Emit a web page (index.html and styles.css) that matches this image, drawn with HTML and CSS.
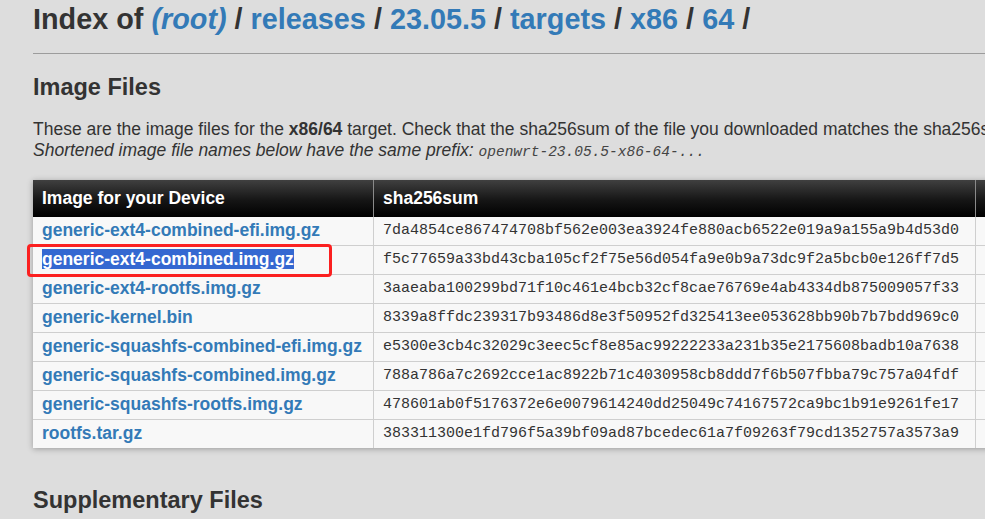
FILE: index.html
```html
<!DOCTYPE html>
<html lang="en">
<head>
<meta charset="utf-8">
<title>Index of (root) / releases / 23.05.5 / targets / x86 / 64 /</title>
<link rel="stylesheet" href="styles.css">
</head>
<body>
<div class="page">
  <h1 class="title">Index of <a href="#" class="root">(root)</a> / <a href="#">releases</a> / <a href="#">23.05.5</a> / <a href="#">targets</a> / <a href="#">x86</a> / <a href="#">64</a> /</h1>
  <hr class="rule">
  <h2 class="section">Image Files</h2>
  <p class="intro">These are the image files for the <b>x86/64</b> target. Check that the sha256sum of the file you downloaded matches the sha256sum below.<br>
  <i>Shortened image file names below have the same prefix: <code class="prefix">openwrt-23.05.5-x86-64-...</code></i></p>
  <table class="files">
    <colgroup><col class="c1"><col class="c2"><col class="c3"><col class="c4"></colgroup>
    <thead>
      <tr><th>Image for your Device</th><th>sha256sum</th><th>File Size</th><th>Date</th></tr>
    </thead>
    <tbody>
      <tr><td class="name"><a href="#">generic-ext4-combined-efi.img.gz</a></td><td class="sh">7da4854ce867474708bf562e003ea3924fe880acb6522e019a9a155a9b4d53d0</td><td>12157.3 KB</td><td>Sat Sep 28</td></tr>
      <tr><td class="name mark"><a href="#" class="sel">generic-ext4-combined.img.gz</a><span class="redbox"></span></td><td class="sh">f5c77659a33bd43cba105cf2f75e56d054fa9e0b9a73dc9f2a5bcb0e126ff7d5</td><td>12126.7 KB</td><td>Sat Sep 28</td></tr>
      <tr><td class="name"><a href="#">generic-ext4-rootfs.img.gz</a></td><td class="sh">3aaeaba100299bd71f10c461e4bcb32cf8cae76769e4ab4334db875009057f33</td><td>4357.9 KB</td><td>Sat Sep 28</td></tr>
      <tr><td class="name"><a href="#">generic-kernel.bin</a></td><td class="sh">8339a8ffdc239317b93486d8e3f50952fd325413ee053628bb90b7b7bdd969c0</td><td>6198.6 KB</td><td>Sat Sep 28</td></tr>
      <tr><td class="name"><a href="#">generic-squashfs-combined-efi.img.gz</a></td><td class="sh">e5300e3cb4c32029c3eec5cf8e85ac99222233a231b35e2175608badb10a7638</td><td>11015.4 KB</td><td>Sat Sep 28</td></tr>
      <tr><td class="name"><a href="#">generic-squashfs-combined.img.gz</a></td><td class="sh">788a786a7c2692cce1ac8922b71c4030958cb8ddd7f6b507fbba79c757a04fdf</td><td>10984.8 KB</td><td>Sat Sep 28</td></tr>
      <tr><td class="name"><a href="#">generic-squashfs-rootfs.img.gz</a></td><td class="sh">478601ab0f5176372e6e0079614240dd25049c74167572ca9bc1b91e9261fe17</td><td>3216.0 KB</td><td>Sat Sep 28</td></tr>
      <tr class="last"><td class="name"><a href="#">rootfs.tar.gz</a></td><td class="sh">383311300e1fd796f5a39bf09ad87bcedec61a7f09263f79cd1352757a3573a9</td><td>4047.8 KB</td><td>Sat Sep 28</td></tr>
    </tbody>
  </table>
  <h2 class="section supp">Supplementary Files</h2>
</div>
</body>
</html>
```
FILE: styles.css
```css
html {
  overflow: hidden;
  background: #dddddd;
}
body {
  margin: 0;
  padding: 0;
  background: #dddddd;
  color: #333333;
  font-family: "Liberation Sans", Arial, sans-serif;
  font-size: 17.5px;
  line-height: 21px;
}
a {
  color: #337ab7;
  text-decoration: none;
}
.page {
  padding-left: 33px;
  width: 1400px;
}
.title {
  margin: 0;
  padding-top: 2px;
  font-size: 28.8px;
  line-height: 34px;
  font-weight: bold;
  white-space: nowrap;
}
.title .root {
  font-style: italic;
}
.rule {
  border: 0;
  height: 1px;
  background: #9c9c9c;
  margin: 17px 0 0 0;
}
.section {
  margin: 19px 0 0 0;
  font-size: 23.5px;
  line-height: 28px;
  font-weight: bold;
}
.intro {
  margin: 17.5px 0 0 0;
  white-space: nowrap;
}
.prefix {
  font-family: "Liberation Mono", "Courier New", monospace;
  font-size: 14.5px;
  line-height: 1;
  font-style: italic;
  color: #444;
}
.files {
  margin-top: 19px;
  table-layout: fixed;
  width: 1213px;
  border-collapse: separate;
  border-spacing: 0;
  background: #f8f8f8;
  box-shadow: 0 1px 6px rgba(0, 0, 0, 0.3);
}
.c1 { width: 341px; }
.c2 { width: 602px; }
.c3 { width: 120px; }
.c4 { width: 150px; }
.files th {
  height: 37px;
  padding: 0 9px;
  box-sizing: border-box;
  text-align: left;
  color: #ffffff;
  font-weight: bold;
  background: linear-gradient(to bottom, #404040 0%, #151515 55%, #000000 100%);
  border-right: 1px solid #8a8a8a;
  white-space: nowrap;
}
.files td {
  height: 28px;
  padding: 0 9px;
  border-bottom: 1px solid #cfcfcf;
  border-right: 1px solid #cfcfcf;
  white-space: nowrap;
  vertical-align: middle;
  color: #333;
}
.files tr.last td {
  border-bottom: 0;
}
.files td.name a {
  font-weight: bold;
}
.files td.sh {
  font-family: "Liberation Mono", "Courier New", monospace;
  font-size: 15px;
  color: #333;
}
.mark {
  position: relative;
}
.sel {
  background: #3468d1;
  color: #ffffff !important;
}
.redbox {
  position: absolute;
  left: -6px;
  top: -2px;
  width: 305px;
  height: 33px;
  box-sizing: border-box;
  border: 3px solid #fb2020;
  border-radius: 4px;
}
.supp {
  margin-top: 38px;
}
```
